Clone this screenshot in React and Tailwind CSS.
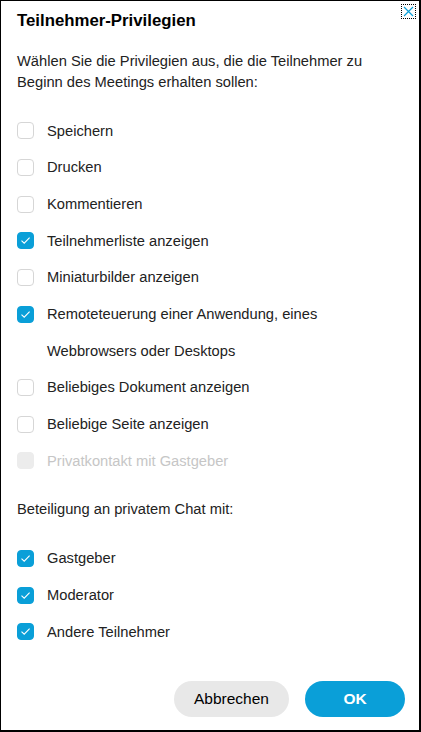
import React, { useState } from "react";

const Check = ({ checked, disabled, onClick }) => (
  <button
    onClick={onClick}
    disabled={disabled}
    className={`w-[17px] h-[17px] shrink-0 rounded-[4px] flex items-center justify-center ${
      disabled
        ? "bg-[#ececec] border border-[#ececec]"
        : checked
        ? "bg-[#0a9fd8] border border-[#0a9fd8]"
        : "bg-white border border-[#d6d6d6]"
    }`}
  >
    {checked && (
      <svg width="11" height="9" viewBox="0 0 11 9" fill="none">
        <path d="M1.5 4.6 L4.2 7.2 L9.6 1.6" stroke="white" strokeWidth="1.1" />
      </svg>
    )}
  </button>
);

const Row = ({ label, checked, disabled, onToggle, noBox }) => (
  <div className="h-[36.67px] flex items-center">
    <div className="w-[30px] shrink-0">
      {!noBox && <Check checked={checked} disabled={disabled} onClick={onToggle} />}
    </div>
    <span className={disabled ? "text-[#c6c6c6]" : "text-[#222]"}>{label}</span>
  </div>
);

export default function App() {
  const [state, setState] = useState({
    save: false,
    print: false,
    comment: false,
    list: true,
    thumbs: false,
    remote: true,
    doc: false,
    page: false,
    host: true,
    mod: true,
    others: true,
  });
  const toggle = (k) => setState((s) => ({ ...s, [k]: !s[k] }));

  return (
    <div
      className="relative w-[421px] h-[732px] bg-white border-t border-l border-r-2 border-b-2 border-black text-[14.7px] text-[#222] pl-[16px] pr-[14px]"
      style={{ fontFamily: '"Liberation Sans", Arial, sans-serif' }}
    >
      <button className="absolute right-[3px] top-[3px] w-[15px] h-[15px] border border-dotted border-black flex items-center justify-center">
        <svg width="11" height="11" viewBox="0 0 11 11">
          <path d="M1 1 L10 10 M10 1 L1 10" stroke="#0a9fd8" strokeWidth="1.2" />
        </svg>
      </button>

      <h2 className="pt-[8px] leading-[24px] text-[16.8px] font-bold text-black">Teilnehmer-Privilegien</h2>

      <p className="mt-[17.5px] leading-[21px] max-w-[350px]">
        Wählen Sie die Privilegien aus, die die Teilnehmer zu Beginn des Meetings erhalten sollen:
      </p>

      <div className="mt-[20px] flex flex-col">
        <Row label="Speichern" checked={state.save} onToggle={() => toggle("save")} />
        <Row label="Drucken" checked={state.print} onToggle={() => toggle("print")} />
        <Row label="Kommentieren" checked={state.comment} onToggle={() => toggle("comment")} />
        <Row label="Teilnehmerliste anzeigen" checked={state.list} onToggle={() => toggle("list")} />
        <Row label="Miniaturbilder anzeigen" checked={state.thumbs} onToggle={() => toggle("thumbs")} />
        <Row label="Remoteteuerung einer Anwendung, eines" checked={state.remote} onToggle={() => toggle("remote")} />
        <Row label="Webbrowsers oder Desktops" noBox />
        <Row label="Beliebiges Dokument anzeigen" checked={state.doc} onToggle={() => toggle("doc")} />
        <Row label="Beliebige Seite anzeigen" checked={state.page} onToggle={() => toggle("page")} />
        <Row label="Privatkontakt mit Gastgeber" disabled />
      </div>

      <p className="mt-[20px] leading-[21px]">Beteiligung an privatem Chat mit:</p>

      <div className="mt-[20px] flex flex-col">
        <Row label="Gastgeber" checked={state.host} onToggle={() => toggle("host")} />
        <Row label="Moderator" checked={state.mod} onToggle={() => toggle("mod")} />
        <Row label="Andere Teilnehmer" checked={state.others} onToggle={() => toggle("others")} />
      </div>

      <div className="mt-[30.7px] flex justify-end gap-[16px]">
        <button className="w-[115px] h-[36px] rounded-full bg-[#e8e8e8] text-black text-[15.5px]">
          Abbrechen
        </button>
        <button className="w-[100px] h-[36px] rounded-full bg-[#0a9fd8] text-white text-[15.5px] font-bold">
          OK
        </button>
      </div>
    </div>
  );
}
